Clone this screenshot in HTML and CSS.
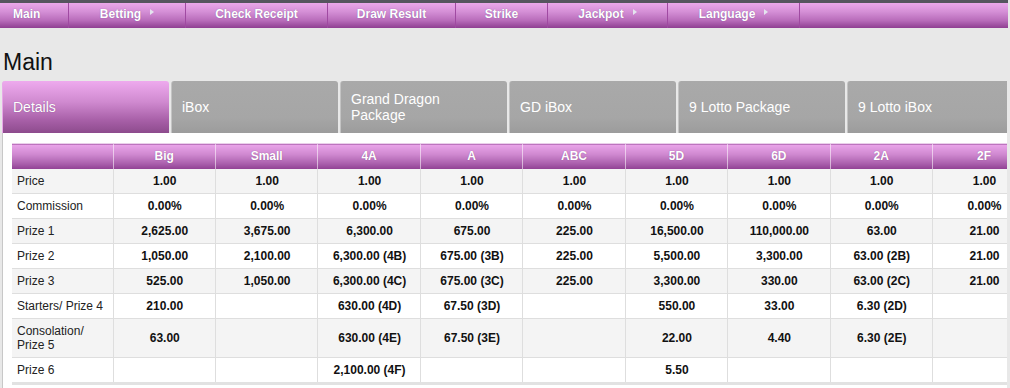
FILE: index.html
```html
<!DOCTYPE html>
<html>
<head>
<meta charset="utf-8">
<link rel="stylesheet" href="styles.css">
</head>
<body>
<div class="topline"></div>
<nav class="menu">
  <div class="mi mi-main">Main</div>
  <div class="mi w117">Betting<span class="arrow"></span></div>
  <div class="mi w142">Check Receipt</div>
  <div class="mi w128">Draw Result</div>
  <div class="mi w92">Strike</div>
  <div class="mi w120">Jackpot<span class="arrow"></span></div>
  <div class="mi w132">Language<span class="arrow"></span></div>
</nav>
<div class="page">
  <h1 class="title">Main</h1>
  <div class="tabs">
    <div class="tab active">Details</div>
    <div class="tab">iBox</div>
    <div class="tab">Grand Dragon<br>Package</div>
    <div class="tab">GD iBox</div>
    <div class="tab">9 Lotto Package</div>
    <div class="tab">9 Lotto iBox</div>
  </div>
  <div class="panel">
    <table class="prizes">
      <thead>
        <tr><th></th><th>Big</th><th>Small</th><th>4A</th><th>A</th><th>ABC</th><th>5D</th><th>6D</th><th>2A</th><th>2F</th></tr>
      </thead>
      <tbody>
        <tr class="odd"><td class="lbl">Price</td><td>1.00</td><td>1.00</td><td>1.00</td><td>1.00</td><td>1.00</td><td>1.00</td><td>1.00</td><td>1.00</td><td>1.00</td></tr>
        <tr><td class="lbl">Commission</td><td>0.00%</td><td>0.00%</td><td>0.00%</td><td>0.00%</td><td>0.00%</td><td>0.00%</td><td>0.00%</td><td>0.00%</td><td>0.00%</td></tr>
        <tr class="odd"><td class="lbl">Prize 1</td><td>2,625.00</td><td>3,675.00</td><td>6,300.00</td><td>675.00</td><td>225.00</td><td>16,500.00</td><td>110,000.00</td><td>63.00</td><td>21.00</td></tr>
        <tr><td class="lbl">Prize 2</td><td>1,050.00</td><td>2,100.00</td><td>6,300.00 (4B)</td><td>675.00 (3B)</td><td>225.00</td><td>5,500.00</td><td>3,300.00</td><td>63.00 (2B)</td><td>21.00</td></tr>
        <tr class="odd"><td class="lbl">Prize 3</td><td>525.00</td><td>1,050.00</td><td>6,300.00 (4C)</td><td>675.00 (3C)</td><td>225.00</td><td>3,300.00</td><td>330.00</td><td>63.00 (2C)</td><td>21.00</td></tr>
        <tr><td class="lbl">Starters/ Prize 4</td><td>210.00</td><td></td><td>630.00 (4D)</td><td>67.50 (3D)</td><td></td><td>550.00</td><td>33.00</td><td>6.30 (2D)</td><td></td></tr>
        <tr class="odd"><td class="lbl">Consolation/ Prize 5</td><td>63.00</td><td></td><td>630.00 (4E)</td><td>67.50 (3E)</td><td></td><td>22.00</td><td>4.40</td><td>6.30 (2E)</td><td></td></tr>
        <tr class="last"><td class="lbl">Prize 6</td><td></td><td></td><td>2,100.00 (4F)</td><td></td><td></td><td>5.50</td><td></td><td></td><td></td></tr>
      </tbody>
    </table>
  </div>
</div>
</body>
</html>
```
FILE: styles.css
```css
html, body {
  margin: 0;
  padding: 0;
}
body {
  background: #e8e8e8;
  font-family: "Liberation Sans", Arial, sans-serif;
  color: #111;
  width: 1010px;
  overflow: hidden;
}
.topline {
  height: 3px;
  background: #55555e;
  width: 1008px;
}
.menu {
  display: flex;
  width: 1008px;
  height: 25px;
  background: linear-gradient(to bottom, #eaa8ea 0%, #d48fd6 35%, #b86cba 70%, #8f3f92 100%);
}
.mi {
  box-sizing: border-box;
  height: 25px;
  line-height: 22px;
  font-size: 12px;
  font-weight: bold;
  color: #fff;
  text-align: center;
  border-right: 1px solid #a04aa2;
  text-shadow: 0 0 1px rgba(80, 60, 120, 0.6);
  white-space: nowrap;
}
.mi-main { width: 69px; text-align: left; padding-left: 13px; }
.w117 { width: 117px; }
.w142 { width: 142px; }
.w128 { width: 128px; }
.w92 { width: 92px; }
.w120 { width: 120px; }
.w132 { width: 132px; }
.arrow {
  display: inline-block;
  width: 0;
  height: 0;
  margin-left: 9px;
  border-left: 4px solid #e4e4ee;
  border-top: 3.5px solid transparent;
  border-bottom: 3.5px solid transparent;
  vertical-align: 3px;
}
.page {
  padding-left: 2px;
  width: 1005px;
  overflow: hidden;
}
.title {
  margin: 21px 0 6px 1px;
  font-size: 23px;
  line-height: 26px;
  font-weight: normal;
  color: #111;
}
.tabs {
  display: flex;
  gap: 2px;
  height: 52px;
}
.tab {
  flex: 0 0 167px;
  box-sizing: border-box;
  display: flex;
  align-items: center;
  padding-left: 10px;
  font-size: 14px;
  line-height: 16px;
  color: #fff;
  background: linear-gradient(to bottom, #a9a9a9 0%, #a6a6a6 70%, #9c9c9c 100%);
  border-radius: 3px 3px 0 0;
  border-left: 1px solid #c4c4c4;
}
.tab.active {
  background: linear-gradient(to bottom, #eeaaee 0%, #d08ad0 40%, #a860a8 75%, #8d4b8d 100%);
  border-left: 1px solid #e8a8e8;
  text-shadow: 0 0 1px rgba(80, 40, 90, 0.5);
}
.panel {
  background: #fff;
  border-left: 1px solid #c8c8c8;
  padding: 10px 0 6px 9px;
  overflow: hidden;
}
.prizes {
  border-collapse: collapse;
  table-layout: fixed;
  width: 1023px;
  font-size: 12px;
}
.prizes th {
  height: 25px;
  padding: 0 4px;
  box-sizing: border-box;
  font-weight: bold;
  color: #fff;
  text-align: center;
  background: linear-gradient(to bottom, #eaa6ea 0%, #cf88d0 40%, #ac62ae 75%, #8f4092 100%);
  border-left: 1px solid rgba(255, 255, 255, 0.55);
  border-top: 1px solid #ead0ea;
  text-shadow: 0 0 1px rgba(80, 40, 90, 0.5);
}
.prizes th:first-child {
  width: 101px;
  border-left: none;
}
.prizes td {
  padding: 5px 4px 5px 5px;
  line-height: 14px;
  text-align: center;
  font-weight: bold;
  color: #111;
  border-bottom: 1px solid #dedede;
  border-left: 1px solid #dedede;
}
.prizes td.lbl {
  text-align: left;
  font-weight: normal;
  color: #222;
  border-left: none;
}
.prizes tr.odd td {
  background: #f4f4f4;
}
.prizes tr.last td {
  border-bottom: 3px solid #e2e2e2;
}
```
